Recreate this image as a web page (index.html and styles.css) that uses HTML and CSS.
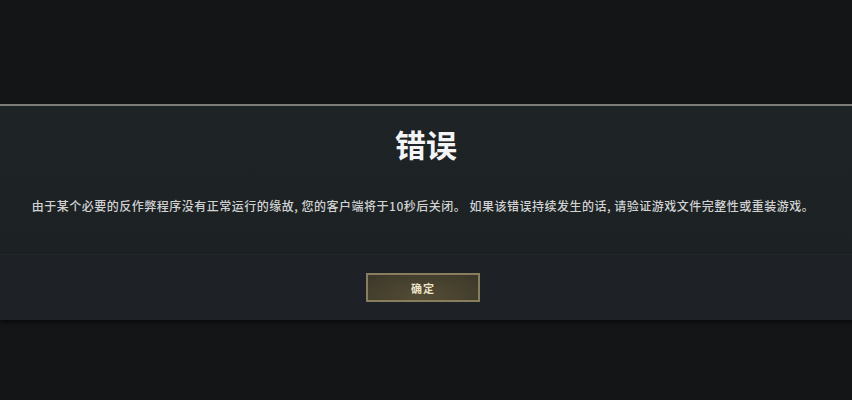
FILE: index.html
```html
<!DOCTYPE html>
<html>
<head>
    <title>错误</title>
    <meta charset="utf-8">
    <link rel="stylesheet" href="styles.css">
</head>
<body>
    <div class="screen">
        <div class="dialog">
            <div class="dialog-body">
                <h1 class="dialog-title">错误</h1>
                <p class="dialog-text">由于某个必要的反作弊程序没有正常运行的缘故, 您的客户端将于10秒后关闭。 如果该错误持续发生的话, 请验证游戏文件完整性或重装游戏。</p>
            </div>
            <div class="dialog-footer">
                <button class="ok-btn">确定</button>
            </div>
        </div>
    </div>
</body>
</html>
```

FILE: styles.css
```css
body {
    margin: 0;
    background: #141517;
    font-family: "Noto Sans CJK SC", "Noto Sans", sans-serif;
    color: #ffffff;
}
.screen {
    height: 400px;
    padding-top: 104px;
    box-sizing: border-box;
}
.dialog {
    border-top: 2px solid #7c7d7b;
    background: linear-gradient(180deg, #1e2426 0%, #1b2022 100%);
    box-shadow: 0 2px 4px rgba(0, 0, 0, 0.6);
}
.dialog-body {
    padding-top: 18px;
    height: 130px;
    text-align: center;
}
.dialog-title {
    margin: 0;
    font-size: 31px;
    line-height: 40px;
    font-weight: bold;
    color: #f4f4f4;
}
.dialog-text {
    margin: 32px 0 0;
    padding-right: 6px;
    font-size: 12px;
    line-height: 20px;
    letter-spacing: 0.5px;
    font-weight: 500;
    color: #d2d2d2;
}
.dialog-footer {
    height: 66px;
    box-sizing: border-box;
    padding-top: 18px;
    padding-right: 6px;
    display: flex;
    justify-content: center;
    align-items: flex-start;
    background: #1e2125;
    border-top: 1px solid #22282a;
}
.ok-btn {
    width: 114px;
    height: 29px;
    padding: 0;
    border: 2px solid #877e5e;
    background: radial-gradient(ellipse at 50% 90%, #544c35 0%, #433e2d 70%, #3b3729 100%);
    color: #ece2c6;
    font-family: "Noto Sans CJK SC", sans-serif;
    font-size: 11px;
    font-weight: bold;
    letter-spacing: 1px;
    cursor: pointer;
}
```
